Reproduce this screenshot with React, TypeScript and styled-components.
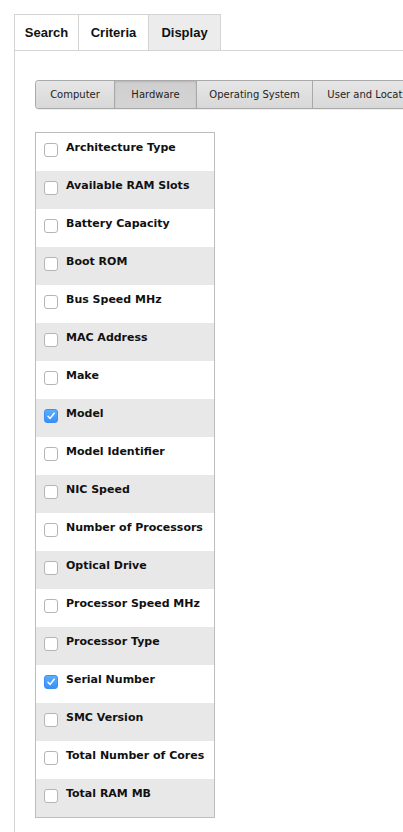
import styled, { createGlobalStyle } from 'styled-components'

const GlobalStyle = createGlobalStyle`
    html, body {
        margin: 0;
        padding: 0;
        background: #ffffff;
        font-family: "DejaVu Sans", Verdana, sans-serif;
        color: #1a1a1a;
    }
`

const fields = [
    'Architecture Type',
    'Available RAM Slots',
    'Battery Capacity',
    'Boot ROM',
    'Bus Speed MHz',
    'MAC Address',
    'Make',
    'Model',
    'Model Identifier',
    'NIC Speed',
    'Number of Processors',
    'Optical Drive',
    'Processor Speed MHz',
    'Processor Type',
    'Serial Number',
    'SMC Version',
    'Total Number of Cores',
    'Total RAM MB',
]

const checked = ['Model', 'Serial Number']

const tabs = [
    { name: 'Search', width: 65 },
    { name: 'Criteria', width: 70 },
    { name: 'Display', width: 72, active: true },
]

const segments = [
    { name: 'Computer', width: 79 },
    { name: 'Hardware', width: 82, active: true },
    { name: 'Operating System', width: 116 },
    { name: 'User and Location', width: 120 },
]

// Styles
const Page = styled.div`
    width: 403px;
    height: 832px;
    overflow: hidden;
    padding: 14px 0 0 14px;
    box-sizing: border-box;
`

const Tabs = styled.div`
    display: flex;
    height: 37px;
`

const Tab = styled.div<{ $active?: boolean; $first: boolean; $width: number }>`
    flex: none;
    width: ${p => p.$width}px;
    box-sizing: border-box;
    display: flex;
    align-items: center;
    justify-content: center;
    font-family: "Liberation Sans", Arial, sans-serif;
    font-size: 13px;
    font-weight: bold;
    color: #111;
    border: 1px solid #d4d4d4;
    border-left: ${p => (p.$first ? '1px solid #d4d4d4' : 'none')};
    background: ${p => (p.$active ? '#ececec' : '#fff')};
`

const Panel = styled.div`
    border-left: 1px solid #d4d4d4;
    border-top: 1px solid #d4d4d4;
    margin-top: -1px;
    padding: 29px 0 0 20px;
    height: 800px;
`

const Segments = styled.div`
    display: flex;
    height: 29px;
    width: 400px;
    box-sizing: border-box;
    border: 1px solid #a9a9a9;
    border-right: none;
    border-radius: 4px 0 0 4px;
    overflow: hidden;
    box-shadow: 0 1px 0 #eee;
`

const Segment = styled.div<{ $active?: boolean; $width: number }>`
    flex: none;
    width: ${p => p.$width}px;
    display: flex;
    align-items: center;
    justify-content: center;
    font-size: 10px;
    color: #1e1e1e;
    white-space: nowrap;
    border-right: 1px solid #a9a9a9;
    box-sizing: border-box;
    background: ${p =>
        p.$active
            ? 'linear-gradient(#cfcfcf, #d4d4d4)'
            : 'linear-gradient(#e6e6e6, #d8d8d8)'};
    box-shadow: ${p => (p.$active ? 'inset 0 1px 2px rgba(0,0,0,0.12)' : 'none')};
`

const List = styled.div`
    margin-top: 23px;
    width: 180px;
    box-sizing: border-box;
    border: 1px solid #bdbdbd;
`

const Row = styled.label<{ $odd: boolean }>`
    display: flex;
    align-items: flex-start;
    height: 38px;
    box-sizing: border-box;
    padding: 8px 0 0 8px;
    background: ${p => (p.$odd ? '#e8e8e8' : '#fff')};
`

const Box = styled.span<{ $on: boolean }>`
    flex: none;
    width: 14px;
    height: 14px;
    margin-top: 2px;
    border-radius: 3px;
    box-sizing: border-box;
    display: flex;
    align-items: center;
    justify-content: center;
    border: 1px solid ${p => (p.$on ? '#3a8ef5' : '#b5b5b5')};
    background: ${p => (p.$on ? 'linear-gradient(#5aaeff, #3891f8)' : '#fff')};
`

const Label = styled.span`
    margin-left: 8px;
    font-size: 11px;
    line-height: 13px;
    font-weight: bold;
    color: #111;
    white-space: nowrap;
`

function Check() {
    return (
        <svg width='10' height='10' viewBox='0 0 10 10'>
            <path d='M2 5.3 L4.1 7.4 L8.2 2.2' fill='none' stroke='#fff' strokeWidth='1.5' strokeLinecap='round' strokeLinejoin='round' />
        </svg>
    )
}

function App() {
    return (
        <Page>
            <GlobalStyle />
            <Tabs>
                {tabs.map((t, i) => (
                    <Tab key={t.name} $first={i === 0} $width={t.width} $active={t.active}>
                        {t.name}
                    </Tab>
                ))}
            </Tabs>
            <Panel>
                <Segments>
                    {segments.map(s => (
                        <Segment key={s.name} $width={s.width} $active={s.active}>
                            {s.name}
                        </Segment>
                    ))}
                </Segments>
                <List>
                    {fields.map((f, i) => {
                        const on = checked.includes(f)
                        return (
                            <Row key={f} $odd={i % 2 === 1}>
                                <Box $on={on}>{on && <Check />}</Box>
                                <Label>{f}</Label>
                            </Row>
                        )
                    })}
                </List>
            </Panel>
        </Page>
    )
}

export default App
